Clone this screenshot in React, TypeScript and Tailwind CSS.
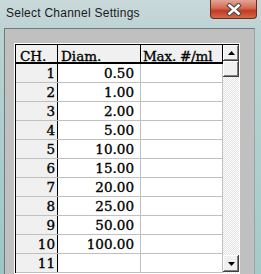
const rows = [
  ["1", "0.50"],
  ["2", "1.00"],
  ["3", "2.00"],
  ["4", "5.00"],
  ["5", "10.00"],
  ["6", "15.00"],
  ["7", "20.00"],
  ["8", "25.00"],
  ["9", "50.00"],
  ["10", "100.00"],
  ["11", ""],
];

const btn =
  "bg-[#f0f0f0] shadow-[inset_-1px_-1px_#404040,inset_1px_1px_#ffffff,inset_-2px_-2px_#808080] flex items-center justify-center";

function Arrow({ up }: { up?: boolean }) {
  return (
    <svg width="7" height="4" viewBox="0 0 7 4">
      <path d={up ? "M3.5 0 L7 4 L0 4 Z" : "M0 0 L7 0 L3.5 4 Z"} fill="#000" />
    </svg>
  );
}

function CloseButton() {
  return (
    <div className="mr-[4px] h-[19px] w-[47px] rounded-b-[4px] border border-t-0 border-[#6e2a1e] bg-[linear-gradient(#e3a595,#d46a52_45%,#c23a22_60%,#d5684c)] flex items-center justify-center">
      <svg width="16" height="13" viewBox="0 0 16 13">
        <path d="M3.5 2.5 L12.5 10.5 M12.5 2.5 L3.5 10.5" stroke="#4a4a4a" strokeWidth="4.6" strokeLinecap="square" />
        <path d="M3.5 2.5 L12.5 10.5 M12.5 2.5 L3.5 10.5" stroke="#ffffff" strokeWidth="2.6" strokeLinecap="square" />
      </svg>
    </div>
  );
}

export default function App() {
  return (
    <div className="w-[261px] h-[274px] overflow-hidden flex flex-col bg-[linear-gradient(#c6d8d9,#a6cbc8)]">
      <div className="h-[28px] shrink-0 flex items-start justify-between bg-[linear-gradient(#c9d9da,#bfd3d4)]">
        <span className="pl-[6px] pt-[6px] text-[12px] leading-[14px] tracking-[0.25px] text-[#1a1a1a] font-['Liberation_Sans',sans-serif]">
          Select Channel Settings
        </span>
        <CloseButton />
      </div>

      <div className="flex flex-1 min-h-0">
        <div className="w-[4px] bg-[linear-gradient(#bad2d2,#9cc6c3)]" />
        <div className="flex-1 border-l border-t border-r border-l-[#6f7a7a] border-t-[#6f7a7a] border-r-[#9aa4a4] bg-[#c0c0c0] pl-[9px] pt-[14px]">
          <div className="w-[226px] border border-white font-['DejaVu_Serif',serif] text-[13.5px] text-black [-webkit-text-stroke:0.35px_#000]">
            <div className="flex border-l border-t border-black">
              <div className="w-[207px]">
                <div className="flex h-[19px] border-b-2 border-black bg-[#f0f0f0] leading-[16px]">
                  <div className="w-[42px] border-r border-black pl-[4px] pt-[3px]">CH.</div>
                  <div className="w-[83px] border-r border-black pl-[3px] pt-[3px]">Diam.</div>
                  <div className="w-[82px] border-r border-black pl-[2px] pt-[3px] tracking-[-0.2px]">Max. #/ml</div>
                </div>
                {rows.map(([ch, d]) => (
                  <div key={ch} className="flex h-[19px] border-b border-[#c0c0c0] leading-[18px]">
                    <div className="w-[42px] border-r border-r-black bg-[#f0f0f0] text-right pr-[2px]">{ch}</div>
                    <div className="w-[83px] border-r border-[#c0c0c0] bg-white text-right pr-[6px]">{d}</div>
                    <div className="w-[82px] border-r border-[#c0c0c0] bg-white" />
                  </div>
                ))}
              </div>
              <div className="w-[16px] flex flex-col bg-[repeating-conic-gradient(#e2e2e2_0%_25%,#ffffff_0%_50%)] bg-[length:2px_2px]">
                <div className={`h-[16px] ${btn}`}>
                  <Arrow up />
                </div>
                <div className={`h-[16px] ${btn}`} />
                <div className="flex-1" />
                <div className={`h-[17px] mb-[1px] ${btn}`}>
                  <Arrow />
                </div>
              </div>
            </div>
          </div>
        </div>
        <div className="w-[6px] bg-[linear-gradient(#bcd3d3,#a2ccc9)]" />
      </div>
    </div>
  );
}
